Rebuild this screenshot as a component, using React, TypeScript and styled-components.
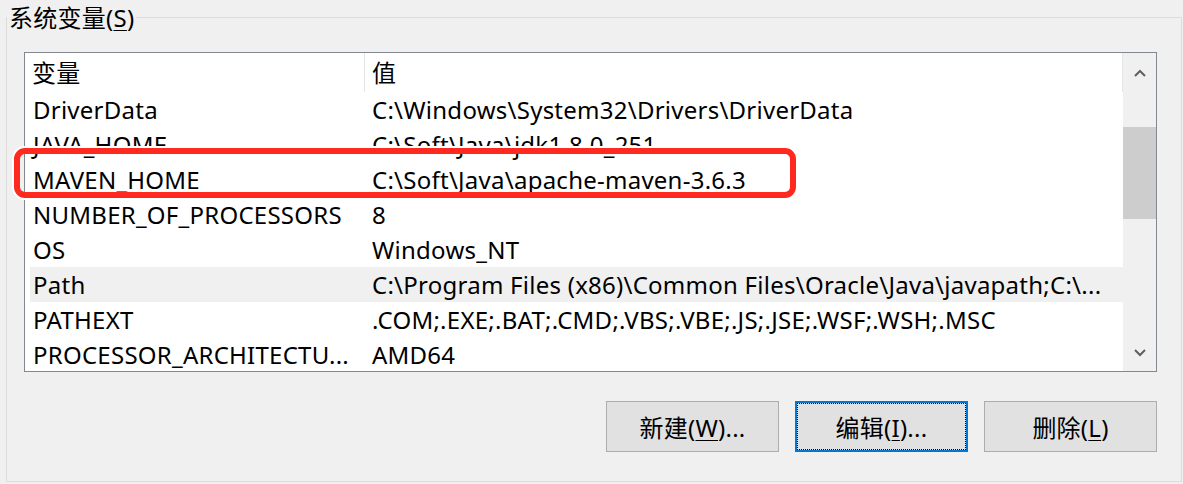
import styled, { createGlobalStyle } from "styled-components";

const GlobalStyle = createGlobalStyle`
  html, body {
    margin: 0;
    background: #f0f0f0;
  }
  body {
    font-family: "Noto Sans", "Noto Sans CJK SC", sans-serif;
    color: #000;
  }
`;

type EnvVar = { name: string; value: string };

const variables: EnvVar[] = [
  { name: "DriverData", value: "C:\\Windows\\System32\\Drivers\\DriverData" },
  { name: "JAVA_HOME", value: "C:\\Soft\\Java\\jdk1.8.0_251" },
  { name: "MAVEN_HOME", value: "C:\\Soft\\Java\\apache-maven-3.6.3" },
  { name: "NUMBER_OF_PROCESSORS", value: "8" },
  { name: "OS", value: "Windows_NT" },
  {
    name: "Path",
    value: "C:\\Program Files (x86)\\Common Files\\Oracle\\Java\\javapath;C:\\...",
  },
  { name: "PATHEXT", value: ".COM;.EXE;.BAT;.CMD;.VBS;.VBE;.JS;.JSE;.WSF;.WSH;.MSC" },
  { name: "PROCESSOR_ARCHITECTU...", value: "AMD64" },
];

const SELECTED = "Path";

const Chevron = ({ up }: { up?: boolean }) => (
  <svg width="12" height="8" viewBox="0 0 12 8">
    <polyline
      points={up ? "1,7 6,2 11,7" : "1,1 6,6 11,1"}
      fill="none"
      stroke="#606060"
      strokeWidth="2"
    />
  </svg>
);

const SystemVariables: React.FC = () => (
  <Page>
    <GlobalStyle />
    <GroupBox>
      <Legend>
        系统变量(<u>S</u>)
      </Legend>
      <ListBox>
        <ListArea>
          <HeaderRow>
            <HeaderCell>变量</HeaderCell>
            <HeaderCell>值</HeaderCell>
          </HeaderRow>
          {variables.map((v) => (
            <Row key={v.name} $selected={v.name === SELECTED}>
              <NameCell>{v.name}</NameCell>
              <ValueCell>{v.value}</ValueCell>
            </Row>
          ))}
        </ListArea>
        <ScrollBar>
          <ArrowButton $height={39}>
            <Chevron up />
          </ArrowButton>
          <Track>
            <Thumb $offset={35} $size={92} />
          </Track>
          <ArrowButton $height={36}>
            <Chevron />
          </ArrowButton>
        </ScrollBar>
      </ListBox>
      <ButtonRow>
        <DialogButton>
          新建(<u>W</u>)...
        </DialogButton>
        <DialogButton $focused>
          编辑(<u>I</u>)...
        </DialogButton>
        <DialogButton>
          删除(<u>L</u>)
        </DialogButton>
      </ButtonRow>
    </GroupBox>
    <Highlight />
  </Page>
);

export default SystemVariables;

// 对话框框架
const Page = styled.div`
  position: relative;
  width: 1183px;
  height: 484px;
  overflow: hidden;
  background: #f0f0f0;
  font-size: 24px;
  letter-spacing: 0.25px;
`;

const GroupBox = styled.fieldset`
  margin: 0 1px 0 6px;
  padding: 17px 24px 29px 17px;
  border: 1px solid #dcdcdc;
  min-width: 0;
`;

const Legend = styled.legend`
  margin-left: -17px;
  padding: 0 2px;
  line-height: 35px;

  u {
    text-decoration-thickness: 1px;
    text-underline-offset: 3px;
  }
`;

// 列表
const ListBox = styled.div`
  display: flex;
  box-sizing: border-box;
  height: 320px;
  border: 1px solid #828790;
  background: #fff;
`;

const ListArea = styled.div`
  flex: 1;
  min-width: 0;
  overflow: hidden;
`;

const HeaderRow = styled.div`
  display: grid;
  grid-template-columns: 340px 1fr;
  height: 39px;
`;

const HeaderCell = styled.div`
  padding-left: 7px;
  line-height: 39px;
  border-right: 1px solid #e5e5e5;
`;

const Row = styled.div<{ $selected?: boolean }>`
  display: grid;
  grid-template-columns: 334px 1fr;
  height: 35px;
  line-height: 35px;
  margin-left: 5px;
  background: ${(p) => (p.$selected ? "#f0f0f0" : "transparent")};
`;

const NameCell = styled.div`
  padding-left: 3px;
  white-space: nowrap;
  overflow: hidden;
`;

const ValueCell = styled.div`
  padding-left: 8px;
  white-space: nowrap;
  overflow: hidden;
`;

// 滚动条
const ScrollBar = styled.div`
  width: 33px;
  display: flex;
  flex-direction: column;
  background: #f0f0f0;
`;

const ArrowButton = styled.div<{ $height: number }>`
  height: ${(p) => p.$height}px;
  display: flex;
  align-items: center;
  justify-content: center;
`;

const Track = styled.div`
  flex: 1;
`;

const Thumb = styled.div<{ $offset: number; $size: number }>`
  margin-top: ${(p) => p.$offset}px;
  height: ${(p) => p.$size}px;
  background: #cdcdcd;
`;

// 按钮
const ButtonRow = styled.div`
  display: flex;
  justify-content: flex-end;
  gap: 16px;
  margin-top: 29px;
`;

const DialogButton = styled.button<{ $focused?: boolean }>`
  box-sizing: border-box;
  width: 173px;
  height: 51px;
  padding: 0;
  background: #e1e1e1;
  border: ${(p) => (p.$focused ? "2px solid #0078d7" : "1px solid #adadad")};
  outline: ${(p) => (p.$focused ? "1px dotted #000" : "none")};
  outline-offset: -3px;
  font-family: inherit;
  font-size: 24px;
  letter-spacing: inherit;
  color: #000;

  u {
    text-decoration-thickness: 1px;
    text-underline-offset: 3px;
  }
`;

// 红色标注框
const Highlight = styled.div`
  position: absolute;
  left: 14px;
  top: 148px;
  width: 782px;
  height: 50px;
  box-sizing: border-box;
  border: 6px solid #ff2a1f;
  border-radius: 11px;
  box-shadow: 0 0 0 2px #fff;
`;
